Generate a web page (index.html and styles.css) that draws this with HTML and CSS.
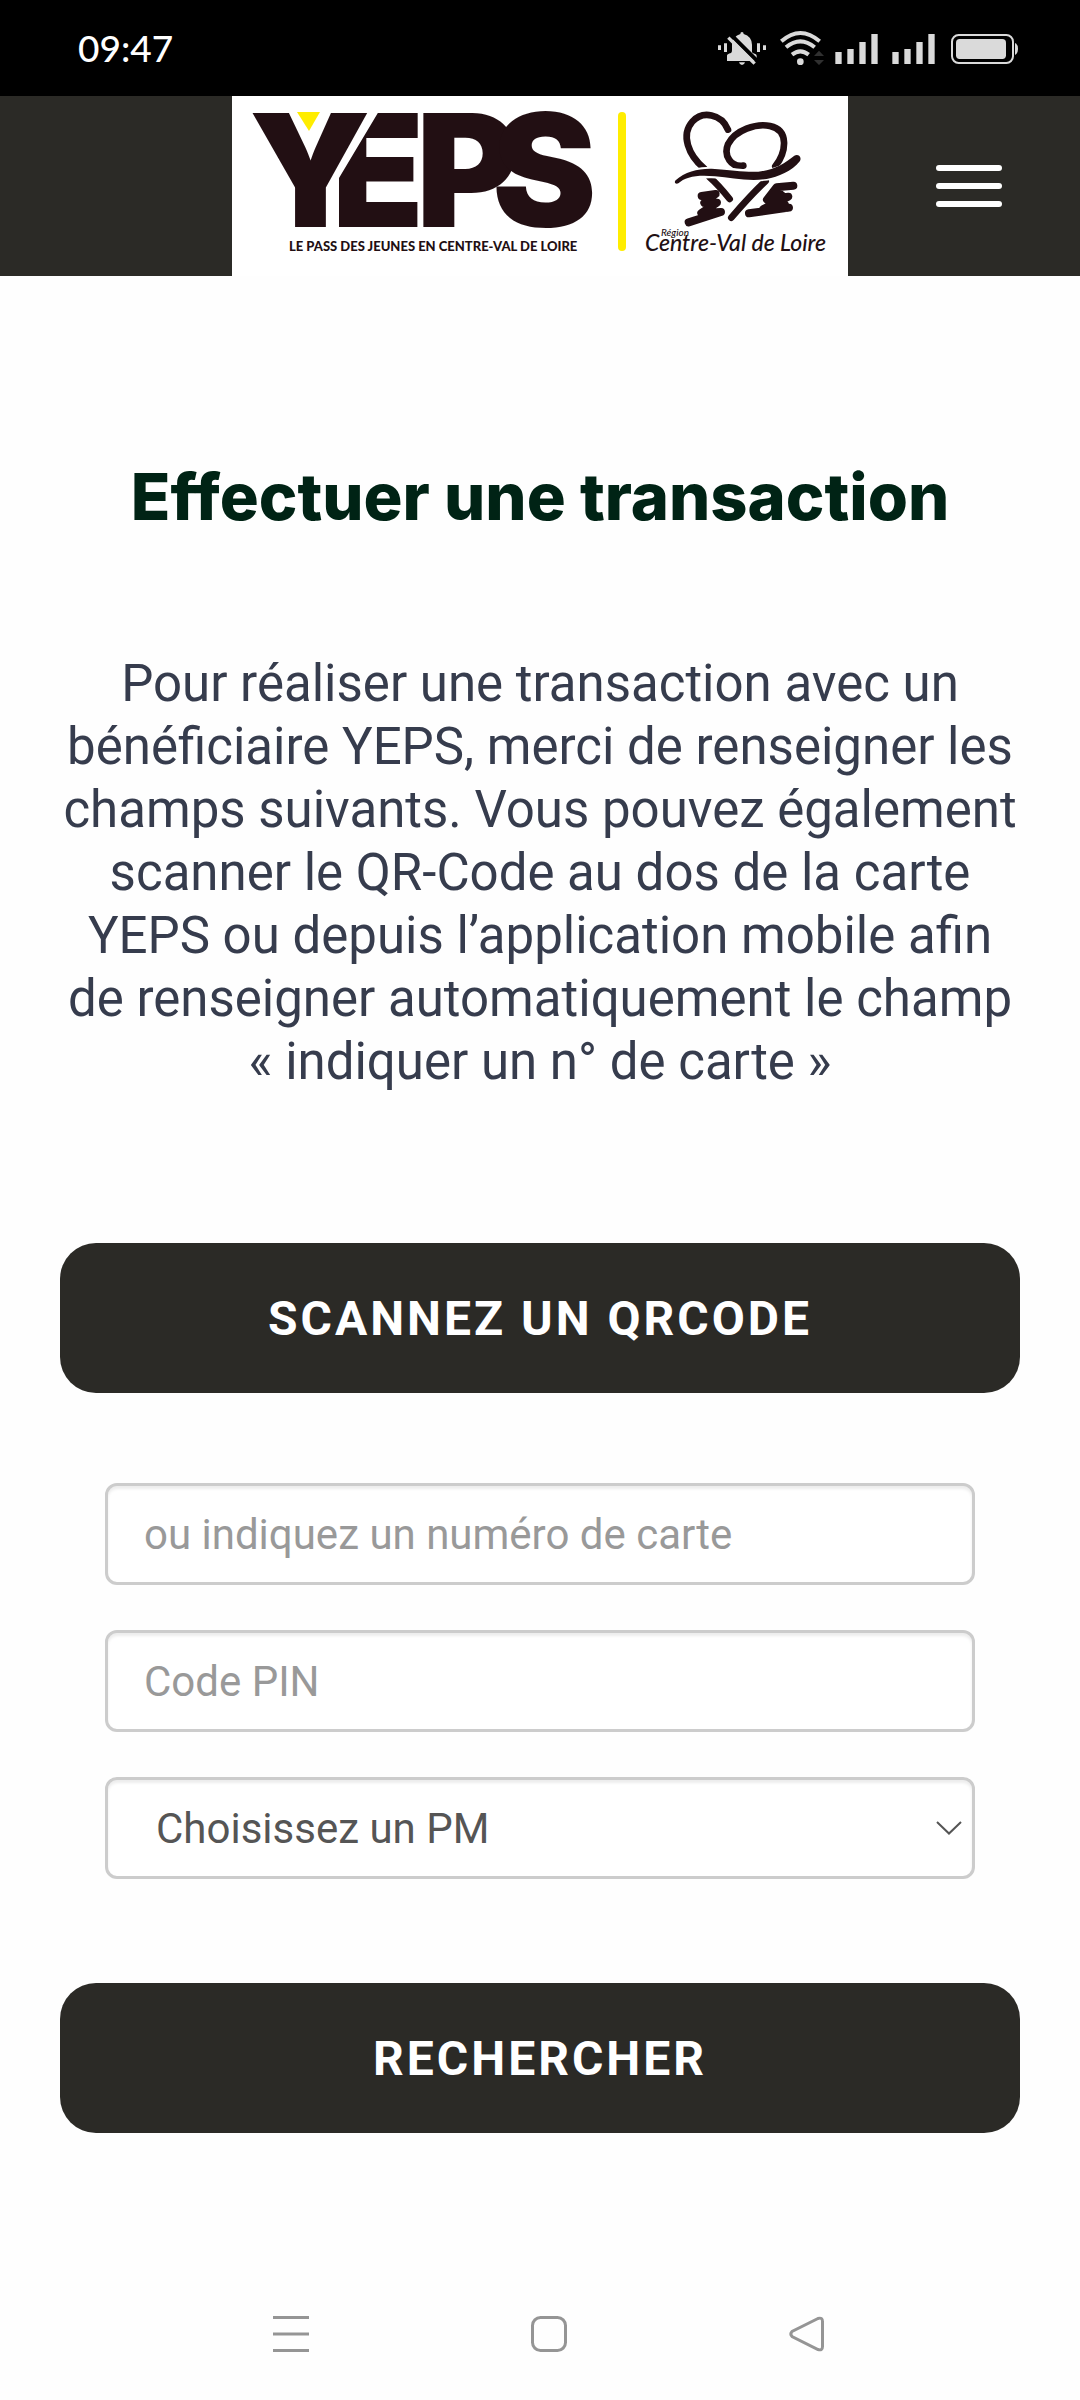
FILE: index.html
```html
<!DOCTYPE html>
<html lang="fr">
<head>
<meta charset="utf-8">
<meta name="viewport" content="width=device-width, initial-scale=1">
<title>YEPS - Effectuer une transaction</title>
<link rel="stylesheet" href="styles.css">
</head>
<body>
<div class="status">
  <time class="status-time">09:47</time>
  <div class="status-icons">
    <svg width="48" height="35" viewBox="54 90 144 105" aria-hidden="true">
      <path d="M54 133h9v14h-9zM72 127h9v26h-9zM171 127h9v26h-9zM189 133h9v14h-9z"/>
      <path d="M81 180v-16q0-5 12-8q3-2 3-8v-22q3-20 25-27q0-6 5-6t5 6q24 7 25 32v22q0 4 8 5q6 1 6 6v16zM117 184h18q-2 8-9 8t-9-8z"/>
      <path class="cut" d="M92 100L176 184"/>
      <path class="slash" d="M85 110L164 188"/>
    </svg>
    <svg class="wifi" width="41" height="35" viewBox="240 90 123 105" aria-hidden="true">
      <path class="arc" d="M244 121Q301 71 359 121M258 139Q301 103 344 139M276 161Q301 141 326 161"/>
      <circle cx="301" cy="182" r="10"/>
      <path class="dim" d="M342 165l15-16 15 16zM342 177h30l-15 15z"/>
    </svg>
    <svg width="43" height="35" viewBox="405 90 129 105" aria-hidden="true">
      <path d="M406 153h19v36h-19zM442 144h19v45h-19zM478 123h19v66h-19zM514 99h19v90h-19z"/>
    </svg>
    <svg width="43" height="35" viewBox="405 90 129 105" aria-hidden="true">
      <path d="M406 153h19v36h-19zM442 144h19v45h-19zM478 123h19v66h-19zM514 99h19v90h-19z"/>
    </svg>
    <svg width="69" height="35" viewBox="747 90 207 105" aria-hidden="true">
      <rect class="shell" x="756" y="102" width="183" height="84" rx="20"/>
      <rect x="768" y="114" width="150" height="60" rx="11"/>
      <path d="M945 126q9 4 9 18t-9 18z"/>
    </svg>
  </div>
</div>

<header class="header">
  <a class="brand" href="#" aria-label="YEPS, accueil">
    <svg class="logo" width="616" height="180" viewBox="0 0 616 180">
      <g class="wordmark">
        <text x="96" y="131">E</text>
        <text x="184" y="131">P</text>
        <text x="260" y="131">S</text>
        <path class="gap" d="M90 10H150L107 82V135H92V82Z"/>
        <text x="17" y="131">Y</text>
      </g>
      <path class="yellow" d="M65 16h23l-11 19z"/>
      <text class="tagline" x="57" y="155">LE PASS DES JEUNES EN CENTRE-VAL DE LOIRE</text>
      <path class="divider" d="M390 20v131"/>
      <g class="heart" transform="translate(403 9) scale(.3333)">
        <path class="line" d="M279 74C260 26 202 16 172 50C137 90 160 150 207 190"/>
        <path class="line" d="M325 182C288 188 265 152 279 118C300 75 365 54 405 63C463 75 454 141 421 184"/>
        <path class="line" d="M223 216C248 238 268 262 284 282"/>
        <path class="line" d="M392 228C352 266 318 304 289 338"/>
        <path class="clear" d="M150 219C190 195 255 202 330 210S450 200 480 170"/>
        <path d="M122 226C150 200 190 190 230 191C290 195 330 202 370 200C415 196 450 175 478 152C490 146 501 156 495 168C470 200 430 215 395 222C340 230 290 218 240 214C190 208 150 215 130 235C122 239 116 232 122 226Z"/>
        <path class="scribble" d="M200 273L242 267L208 294L246 293L199 324L258 321L161 352"/>
        <path class="scribble" d="M475 242L425 247L396 284L460 275L385 312L462 308L342 325M420 255L445 275M405 298L450 300"/>
      </g>
      <text class="region-small" x="429" y="140">Région</text>
      <text class="region" x="413" y="155">Centre-Val de Loire</text>
    </svg>
  </a>
  <button class="menu" type="button" aria-label="Menu"><span></span><span></span><span></span></button>
</header>

<main class="main">
  <h1 class="title">Effectuer une transaction</h1>
  <p class="intro">Pour réaliser une transaction avec un bénéficiaire YEPS, merci de renseigner les champs suivants. Vous pouvez également scanner le QR-Code au dos de la carte YEPS ou depuis l’application mobile afin de renseigner automatiquement le champ «&nbsp;indiquer un n° de carte&nbsp;»</p>
  <form class="form">
    <button class="action" type="button">SCANNEZ UN QRCODE</button>
    <div class="fields">
      <input class="field" type="text" placeholder="ou indiquez un numéro de carte" aria-label="Numéro de carte">
      <input class="field" type="text" placeholder="Code PIN" aria-label="Code PIN">
      <div class="select">
        <select class="field" aria-label="PM"><option>Choisissez un PM</option></select>
        <svg class="chevron" width="26" height="14" viewBox="0 0 26 14" aria-hidden="true"><path d="M1 1L13 12.500L25 1"/></svg>
      </div>
    </div>
    <button class="action" type="submit">RECHERCHER</button>
  </form>
</main>

<nav class="nav" aria-label="Système">
  <button type="button" aria-label="Récents"><svg width="36" height="36" viewBox="0 0 36 36"><path d="M0 1.500h36M0 18h36M0 34.500h36"/></svg></button>
  <button type="button" aria-label="Accueil"><svg width="36" height="36" viewBox="0 0 36 36"><rect x="1.500" y="1.500" width="33" height="33" rx="8"/></svg></button>
  <button type="button" aria-label="Retour"><svg width="36" height="36" viewBox="0 0 36 36"><path d="M29 2.500L3 15.500Q.5 18 3 20.500L29 33.500Q33.500 35 33.500 30.500V5.500Q33.500 1 29 2.500Z"/></svg></button>
</nav>
</body>
</html>
```
FILE: styles.css
```css
* {
  box-sizing: border-box;
}

body {
  display: flex;
  flex-direction: column;
  min-height: 100vh;
  margin: 0;
  background: #fefefe;
  color: #363c4d;
  font-family: Roboto, sans-serif;
}

button {
  border: 0;
  cursor: pointer;
  font-family: inherit;
}

svg {
  display: block;
}

/* Status bar */
.status {
  display: flex;
  align-items: center;
  justify-content: space-between;
  height: 96px;
  padding: 0 62px 0 78px;
  background: #000;
}

.status-time {
  color: #fff;
  font: 500 37px/44px Lato, sans-serif;
}

.status-icons {
  display: flex;
  gap: 14px;
  fill: #dadada;
}

.cut,
.slash {
  stroke: #000;
  stroke-width: 12;
}

.slash {
  stroke: #dadada;
  stroke-width: 10;
}

.wifi {
  overflow: visible;
}

.arc,
.shell {
  fill: none;
  stroke: #dadada;
  stroke-width: 12;
}

.shell {
  stroke-width: 6;
}

.dim {
  fill: #303030;
}

/* Header */
.header {
  display: grid;
  grid-template-columns: 1fr auto 1fr;
  align-items: center;
  background: #2b2a26;
}

.brand {
  grid-column: 2;
  background: #fff;
}

.logo {
  fill: #220f13;
}

.wordmark {
  font: 900 157px Inter, sans-serif;
}

.gap {
  fill: #fff;
}

.yellow {
  fill: #ffed00;
}

.divider {
  stroke: #ffed00;
  stroke-width: 8;
  stroke-linecap: round;
}

.tagline {
  font: 900 13px Lato, sans-serif;
}

.region {
  font: italic 500 23px Lato, sans-serif;
}

.region-small {
  font: italic 500 10px Lato, sans-serif;
}

.line,
.clear,
.scribble {
  fill: none;
  stroke: #220f13;
  stroke-width: 20;
  stroke-linecap: round;
  stroke-linejoin: round;
}

.clear {
  stroke: #fff;
  stroke-width: 34;
  stroke-linecap: butt;
}

.scribble {
  stroke-width: 24;
}

.menu {
  display: flex;
  flex-direction: column;
  justify-self: end;
  gap: 12px;
  width: 66px;
  margin-right: 78px;
  padding: 0;
  background: none;
}

.menu span {
  height: 6px;
  border-radius: 3px;
  background: #fff;
}

/* Content */
.main {
  flex: 1;
  padding: 180px 60px 60px;
}

.title {
  margin: 0 0 114px;
  color: #002315;
  font: 800 65px/82px Inter, sans-serif;
  text-align: center;
}

.intro {
  margin: 0 0 150px;
  font-size: 51px;
  line-height: 63px;
  text-align: center;
}

.action {
  display: block;
  width: 100%;
  height: 150px;
  border-radius: 36px;
  background: #2b2a26;
  color: #fff;
  font-size: 48px;
  font-weight: 700;
  letter-spacing: 3px;
}

.fields {
  display: grid;
  gap: 45px;
  padding: 90px 45px 104px;
}

.field {
  width: 100%;
  height: 102px;
  padding: 0 36px;
  border: 3px solid #ccc;
  border-radius: 12px;
  background: #fff;
  box-shadow: inset 0 3px 3px rgba(0, 0, 0, .075);
  color: #555;
  font: 42px Roboto, sans-serif;
}

.field::placeholder {
  color: #999;
  opacity: 1;
}

.select {
  position: relative;
}

.select .field {
  display: block;
  padding-left: 48px;
  appearance: none;
}

.chevron {
  position: absolute;
  top: 44px;
  right: 13px;
  fill: none;
  stroke: #555;
  stroke-width: 2;
  pointer-events: none;
}

/* System navigation */
.nav {
  display: flex;
  align-items: center;
  justify-content: center;
  gap: 222px;
  height: 132px;
  padding-left: 18px;
}

.nav button {
  padding: 0;
  background: none;
}

.nav svg {
  fill: none;
  stroke: #959595;
  stroke-width: 3;
}
```
